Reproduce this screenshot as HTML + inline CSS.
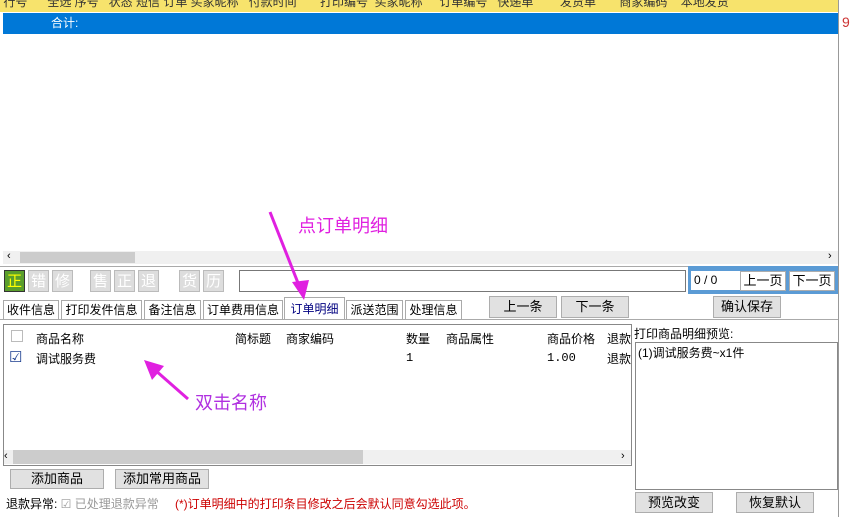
<html><head><style>
body{margin:0;width:850px;height:517px;background:#fff;font-family:"Liberation Sans","Noto Sans CJK SC",sans-serif;font-size:12px;position:relative;overflow:hidden;color:#000}
.a{position:absolute;white-space:nowrap}
.btn{position:absolute;background:#e1e1e1;border:1px solid #adadad;text-align:center;box-sizing:border-box;font-size:13px}
.tab{position:absolute;top:300px;height:19px;border:1px solid #aaa;border-bottom:none;background:#fff;font-size:12px;box-sizing:border-box;line-height:18px;text-align:center;overflow:hidden}
.tb{position:absolute;top:270px;width:21px;height:22px;background:#ddd;border:1px solid #bbb;color:#fff;font-size:15px;text-align:center;line-height:22px;box-sizing:border-box}
</style></head><body>
<div class="a" style="left:0;top:0;width:838px;height:12px;background:#f7e36c;font-size:12px;line-height:5px;overflow:hidden;color:#333">&nbsp;行号 &nbsp;&nbsp;&nbsp;&nbsp;&nbsp;全选 序号 &nbsp;&nbsp;状态 短信 订单 买家昵称 &nbsp;&nbsp;付款时间 &nbsp;&nbsp;&nbsp;&nbsp;&nbsp;&nbsp;打印编号 &nbsp;买家昵称 &nbsp;&nbsp;&nbsp;&nbsp;订单编号 &nbsp;&nbsp;快递单 &nbsp;&nbsp;&nbsp;&nbsp;&nbsp;&nbsp;&nbsp;发货单 &nbsp;&nbsp;&nbsp;&nbsp;&nbsp;&nbsp;商家编码 &nbsp;&nbsp;&nbsp;本地发货</div>
<div class="a" style="left:3px;top:13px;width:835px;height:21px;background:#0078d7;color:#fff;line-height:21px;padding-left:48px;box-sizing:border-box">合计:</div>
<div class="a" style="left:838px;top:0;width:1px;height:517px;background:#999"></div>
<div class="a" style="left:842px;top:14px;color:#c33;font-size:14px">9</div>
<div class="a" style="left:3px;top:251px;width:835px;height:13px;background:#f0f0f0"></div>
<div class="a" style="left:20px;top:252px;width:115px;height:11px;background:#ccc"></div>
<div class="a" style="left:7px;top:250px;font-size:11px">‹</div><div class="a" style="left:828px;top:250px;font-size:11px">›</div>
<div class="a" style="left:0;top:266px;width:838px;height:1px;background:#aaa"></div>
<div class="tb" style="left:4px;background:#5a9e2c;color:#ff0;border-color:#333">正</div>
<div class="tb" style="left:28px">错</div><div class="tb" style="left:52px">修</div>
<div class="tb" style="left:90px">售</div><div class="tb" style="left:114px">正</div><div class="tb" style="left:138px">退</div>
<div class="tb" style="left:179px">货</div><div class="tb" style="left:203px">历</div>
<div class="a" style="left:239px;top:270px;width:447px;height:22px;border:1px solid #777;box-sizing:border-box"></div>
<div class="a" style="left:688px;top:266px;width:150px;height:28px;background:#5b9bd5"></div>
<div class="a" style="left:691px;top:271px;width:46px;height:19px;background:#fff;padding-left:3px;line-height:19px">0 / 0</div>
<div class="btn" style="left:740px;top:271px;width:46px;height:20px;background:#fff;line-height:18px">上一页</div>
<div class="btn" style="left:789px;top:271px;width:46px;height:20px;background:#fff;line-height:18px">下一页</div>
<div class="tab" style="left:3px;width:56px">收件信息</div>
<div class="tab" style="left:61px;width:81px">打印发件信息</div>
<div class="tab" style="left:144px;width:57px">备注信息</div>
<div class="tab" style="left:203px;width:80px">订单费用信息</div>
<div class="tab" style="left:284px;width:61px;top:297px;height:23px;color:#000080;line-height:22px">订单明细</div>
<div class="tab" style="left:346px;width:57px">派送范围</div>
<div class="tab" style="left:405px;width:57px">处理信息</div>
<div class="btn" style="left:489px;top:296px;width:68px;height:22px;line-height:20px">上一条</div>
<div class="btn" style="left:561px;top:296px;width:68px;height:22px;line-height:20px">下一条</div>
<div class="btn" style="left:713px;top:296px;width:68px;height:22px;line-height:20px">确认保存</div>
<div class="a" style="left:0;top:319px;width:838px;height:1px;background:#aaa"></div>
<div class="a" style="left:3px;top:324px;width:629px;height:142px;border:1px solid #888;box-sizing:border-box"></div>
<div class="a" style="left:11px;top:330px;width:10px;height:10px;border:1px solid #bbb"></div>
<div class="a" style="left:36px;top:330px;font-size:12px">商品名称</div>
<div class="a" style="left:235px;top:330px">简标题</div><div class="a" style="left:286px;top:330px">商家编码</div>
<div class="a" style="left:406px;top:330px">数量</div><div class="a" style="left:446px;top:330px">商品属性</div>
<div class="a" style="left:547px;top:330px">商品价格</div><div class="a" style="left:607px;top:330px">退款</div>
<div class="a" style="left:9px;top:348px;font-size:15px;color:#1a3d8f">☑</div>
<div class="a" style="left:36px;top:350px">调试服务费</div>
<div class="a" style="left:406px;top:351px;font-family:'Liberation Mono',monospace">1</div>
<div class="a" style="left:547px;top:351px;font-family:'Liberation Mono',monospace">1.00</div>
<div class="a" style="left:607px;top:350px">退款</div>
<div class="a" style="left:4px;top:450px;width:627px;height:14px;background:#f0f0f0"></div>
<div class="a" style="left:13px;top:450px;width:350px;height:14px;background:#ccc"></div>
<div class="a" style="left:4px;top:450px;font-size:11px">‹</div><div class="a" style="left:621px;top:450px;font-size:11px">›</div>
<div class="btn" style="left:10px;top:469px;width:94px;height:20px;line-height:18px">添加商品</div>
<div class="btn" style="left:115px;top:469px;width:94px;height:20px;line-height:18px">添加常用商品</div>
<div class="a" style="left:6px;top:495px">退款异常: <span style="color:#999">☑ 已处理退款异常</span></div>
<div class="a" style="left:175px;top:495px;color:#c00">(*)订单明细中的打印条目修改之后会默认同意勾选此项。</div>
<div class="a" style="left:634px;top:325px">打印商品明细预览:</div>
<div class="a" style="left:635px;top:342px;width:203px;height:148px;border:1px solid #888;box-sizing:border-box;padding:1px 2px">(1)调试服务费~x1件</div>
<div class="btn" style="left:635px;top:492px;width:78px;height:21px;line-height:19px">预览改变</div>
<div class="btn" style="left:736px;top:492px;width:78px;height:21px;line-height:19px">恢复默认</div>
<div class="a" style="left:298px;top:212px;color:#e020e0;font-size:18px">点订单明细</div>
<div class="a" style="left:195px;top:389px;color:#b030e0;font-size:18px">双击名称</div>
<svg class="a" style="left:0;top:0" width="850" height="517">
<line x1="270" y1="212" x2="300" y2="288" stroke="#e020e0" stroke-width="3"/>
<polygon points="304,300 292,282 309,280" fill="#e020e0"/>
<line x1="188" y1="399" x2="155" y2="370" stroke="#e020e0" stroke-width="3"/>
<polygon points="144,360 164,366 152,380" fill="#e020e0"/>
</svg>
</body></html>
